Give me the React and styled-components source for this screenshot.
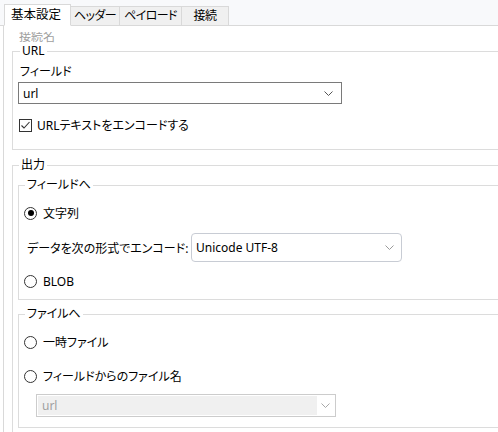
import styled, { createGlobalStyle } from "styled-components";

const GlobalStyle = createGlobalStyle`
  html, body {
    margin: 0;
    padding: 0;
    background: #ffffff;
  }
  body {
    font-family: "Noto Sans", "Noto Sans CJK JP", sans-serif;
    font-size: 12px;
    color: #000000;
    font-feature-settings: "palt";
  }
`;

const Page = styled.div`
  width: 498px;
  height: 432px;
  overflow: hidden;
  display: flex;
  flex-direction: column;
`;

const TabStrip = styled.div`
  background: #f8f9fb;
  display: flex;
  align-items: flex-end;
  height: 25px;
  padding-left: 4px;
  border-bottom: 1px solid #d9d9d9;
`;

const Tab = styled.div`
  box-sizing: border-box;
  min-width: ${(p) => p.$width}px;
  height: ${(p) => (p.$active ? "22px" : "20px")};
  margin-bottom: -1px;
  padding: 0 ${(p) => (p.$active ? "6px" : "3px")};
  display: flex;
  align-items: center;
  justify-content: ${(p) => (p.$active ? "flex-start" : "center")};
  font-size: ${(p) => (p.$active ? "12.5px" : "12px")};
  letter-spacing: ${(p) => (p.$active ? "0" : "-0.6px")};
  line-height: 16px;
  white-space: nowrap;
  background: ${(p) => (p.$active ? "#ffffff" : "#f0f0f0")};
  border: 1px solid #d9d9d9;
  border-bottom: ${(p) => (p.$active ? "1px solid #ffffff" : "1px solid #d9d9d9")};
  & + & {
    border-left: none;
  }
`;

const Panel = styled.div`
  flex: 1;
  margin-left: 3px;
  border-left: 1px solid #d9d9d9;
  overflow: hidden;
`;

const Content = styled.div`
  width: 580px;
`;

const ClippedLabel = styled.div`
  height: 11px;
  overflow: hidden;
  margin: 6px 0 0 15px;
  color: #a0a0a0;
  span {
    display: block;
    margin-top: -3px;
    line-height: 16px;
  }
`;

const Group = styled.fieldset`
  margin: ${(p) => p.$margin || "0"};
  padding: ${(p) => p.$padding || "0 0 0 6px"};
  border: 1px solid #dcdcdc;
  min-width: 0;
`;

const Legend = styled.legend`
  padding: 0 2px;
  margin-left: 1px;
  font-size: 12px;
  line-height: 14px;
`;

const FieldLabel = styled.div`
  margin: 6px 0 0 1px;
  line-height: 16px;
`;

const SelectBox = styled.div`
  box-sizing: border-box;
  width: ${(p) => p.$width}px;
  height: ${(p) => p.$height || 22}px;
  margin: ${(p) => p.$margin || "0"};
  display: flex;
  align-items: stretch;
  border: 1px solid ${(p) => (p.$disabled ? "#cccccc" : p.$rounded ? "#c8ccd4" : "#7a7a7a")};
  border-radius: ${(p) => (p.$rounded ? "4px" : "0")};
  background: #ffffff;
  padding: ${(p) => (p.$disabled ? "1px" : "0")};
`;

const SelectValue = styled.div`
  flex: 1;
  display: flex;
  align-items: center;
  padding-left: 4px;
  background: ${(p) => (p.$disabled ? "#f0f0f0" : "transparent")};
  color: ${(p) => (p.$disabled ? "#a0a0a0" : "#000000")};
  font-size: 12px;
`;

const Arrow = styled.div`
  width: ${(p) => p.$w || 18}px;
  display: flex;
  align-items: center;
  justify-content: center;
`;

const CheckRow = styled.label`
  display: flex;
  align-items: center;
  height: 16px;
  margin-top: 13px;
  gap: 5px;
`;

const CheckBox = styled.span`
  box-sizing: border-box;
  width: 13px;
  height: 13px;
  border: 1px solid #333333;
  display: flex;
  align-items: center;
  justify-content: center;
`;

const RadioRow = styled.label`
  display: flex;
  align-items: center;
  height: 16px;
  margin-top: ${(p) => p.$mt || 0}px;
  gap: 6px;
`;

const RadioCircle = styled.span`
  box-sizing: border-box;
  width: 13px;
  height: 13px;
  border-radius: 50%;
  border: 1px solid #333333;
  display: flex;
  align-items: center;
  justify-content: center;
  &::after {
    content: "";
    width: 6px;
    height: 6px;
    border-radius: 50%;
    background: ${(p) => (p.$checked ? "#000000" : "transparent")};
  }
`;

const EncodeRow = styled.div`
  display: flex;
  align-items: center;
  margin-top: 12px;
  padding-left: 3px;
`;

const EncodeLabel = styled.span`
  width: 164px;
  white-space: nowrap;
`;

function Chevron({ color = "#555555" }) {
  return (
    <svg width="9" height="5" viewBox="0 0 9 5">
      <polyline points="0.5,0.5 4.5,4.5 8.5,0.5" fill="none" stroke={color} strokeWidth="1" />
    </svg>
  );
}

function Radio({ checked, label, mt }) {
  return (
    <RadioRow $mt={mt}>
      <RadioCircle $checked={checked} />
      <span>{label}</span>
    </RadioRow>
  );
}

export default function App() {
  return (
    <Page>
      <GlobalStyle />
      <TabStrip>
        <Tab $active $width={67}>基本設定</Tab>
        <Tab $width={47}>ヘッダー</Tab>
        <Tab $width={62}>ペイロード</Tab>
        <Tab $width={47}>接続</Tab>
      </TabStrip>
      <Panel>
        <Content>
          <ClippedLabel>
            <span>接続名</span>
          </ClippedLabel>
          <Group $margin="1px 0 0 8px" $padding="0 0 16px 6px">
            <Legend>URL</Legend>
            <FieldLabel>フィールド</FieldLabel>
            <SelectBox $width={324} $margin="2px 0 0 -1px">
              <SelectValue>url</SelectValue>
              <Arrow $w={26}>
                <Chevron />
              </Arrow>
            </SelectBox>
            <CheckRow>
              <CheckBox>
                <svg width="11" height="11" viewBox="0 0 11 11">
                  <polyline points="1.5,5.5 4,8 9.5,2" fill="none" stroke="#333333" strokeWidth="1.1" />
                </svg>
              </CheckBox>
              <span>URLテキストをエンコードする</span>
            </CheckRow>
          </Group>

          <Group $margin="8px 0 0 8px" $padding="0 0 40px 5px">
            <Legend>出力</Legend>
            <Group $margin="6px 0 0 0" $padding="0 0 10px 5px">
              <Legend>フィールドへ</Legend>
              <Radio checked label="文字列" mt={13} />
              <EncodeRow>
                <EncodeLabel>データを次の形式でエンコード:</EncodeLabel>
                <SelectBox $width={211} $height={29} $rounded>
                  <SelectValue>Unicode UTF-8</SelectValue>
                  <Arrow $w={24}>
                    <Chevron color="#9a9a9a" />
                  </Arrow>
                </SelectBox>
              </EncodeRow>
              <Radio label="BLOB" mt={11} />
            </Group>
            <Group $margin="7px 0 0 0" $padding="0 0 10px 5px">
              <Legend>ファイルへ</Legend>
              <Radio label="一時ファイル" mt={13} />
              <Radio label="フィールドからのファイル名" mt={18} />
              <SelectBox $width={300} $height={23} $margin="10px 0 0 12px" $disabled>
                <SelectValue $disabled>url</SelectValue>
                <Arrow $w={17}>
                  <Chevron color="#a8a8a8" />
                </Arrow>
              </SelectBox>
            </Group>
          </Group>
        </Content>
      </Panel>
    </Page>
  );
}
